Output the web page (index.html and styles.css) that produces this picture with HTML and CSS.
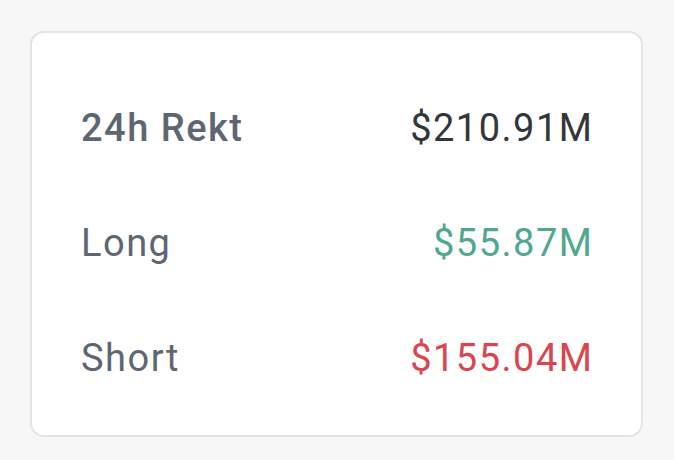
FILE: index.html
```html
<!DOCTYPE html>
<html lang="en">
<head>
  <meta charset="UTF-8">
  <title>24h Rekt</title>
  <link rel="stylesheet" href="styles.css">
</head>
<body>
<div class="card">
  <div class="row">
    <span class="label head">24h Rekt</span>
    <span class="value">$210.91M</span>
  </div>
  <div class="row">
    <span class="label">Long</span>
    <span class="value long">$55.87M</span>
  </div>
  <div class="row">
    <span class="label">Short</span>
    <span class="value short">$155.04M</span>
  </div>
</div>
</body>
</html>
```
FILE: styles.css
```css
body {
  margin: 0;
  padding: 31px 31px 0 30px;
  background-color: #f7f7f7;
  font-family: Roboto, "Liberation Sans", sans-serif;
}
.card {
  background: white;
  border: 2px solid #e4e4e4;
  border-radius: 14px;
  padding: 37px 49px 20px 49px;
}
.row {
  height: 115px;
  display: flex;
  justify-content: space-between;
  align-items: center;
  font-size: 38px;
  letter-spacing: 1.5px;
}
.label {
  color: #5e6673;
}
.head {
  font-weight: 500;
}
.value {
  color: #33363b;
  margin-right: -1.5px;
}
.long {
  color: #4fa88f;
}
.short {
  color: #d9464e;
}
```
